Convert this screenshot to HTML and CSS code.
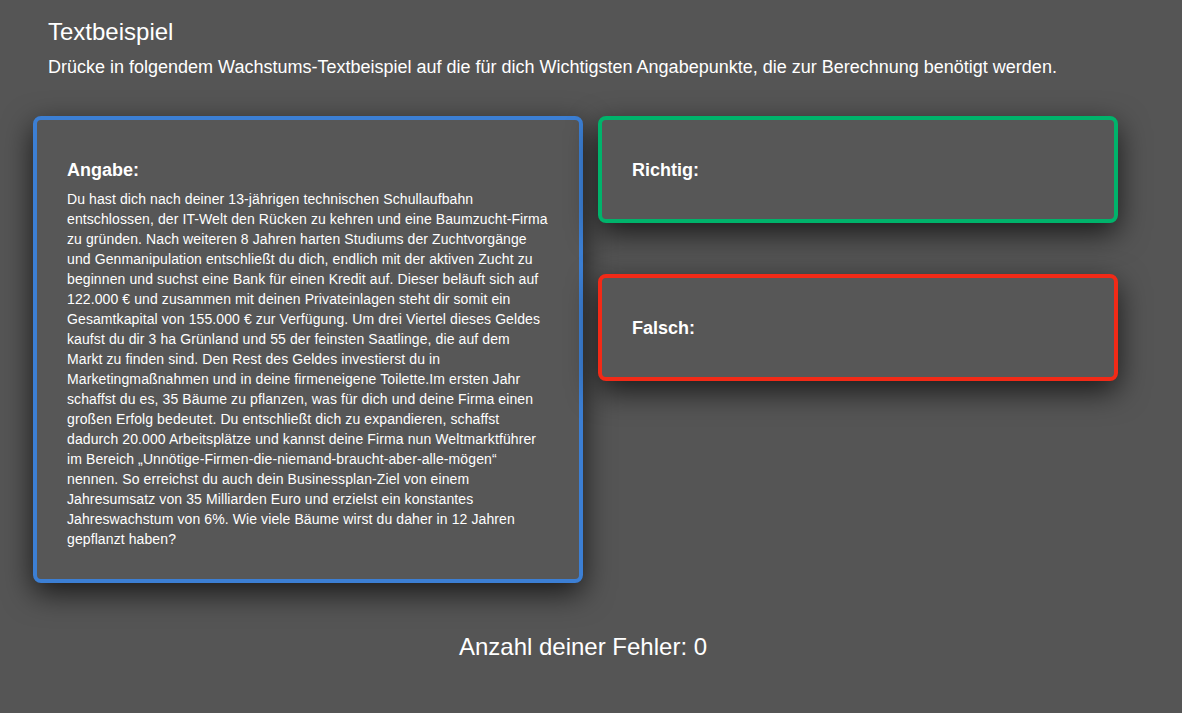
FILE: index.html
```html
<!DOCTYPE html>
<html lang="de">
<head>
<meta charset="utf-8">
<title>Textbeispiel</title>
<link rel="stylesheet" href="styles.css">
</head>
<body>
<div class="page">
  <header class="intro">
    <h1 class="title">Textbeispiel</h1>
    <p class="lead">Drücke in folgendem Wachstums-Textbeispiel auf die für dich Wichtigsten Angabepunkte, die zur Berechnung benötigt werden.</p>
  </header>
  <main class="board">
    <section class="card card-blue">
      <h2 class="card-title">Angabe:</h2>
      <p class="card-text">Du hast dich nach deiner 13-jährigen technischen Schullaufbahn entschlossen, der IT-Welt den Rücken zu kehren und eine Baumzucht-Firma zu gründen. Nach weiteren 8 Jahren harten Studiums der Zuchtvorgänge und Genmanipulation entschließt du dich, endlich mit der aktiven Zucht zu beginnen und suchst eine Bank für einen Kredit auf. Dieser beläuft sich auf 122.000 € und zusammen mit deinen Privateinlagen steht dir somit ein Gesamtkapital von 155.000 € zur Verfügung. Um drei Viertel dieses Geldes kaufst du dir 3 ha Grünland und 55 der feinsten Saatlinge, die auf dem Markt zu finden sind. Den Rest des Geldes investierst du in Marketingmaßnahmen und in deine firmeneigene Toilette.Im ersten Jahr schaffst du es, 35 Bäume zu pflanzen, was für dich und deine Firma einen großen Erfolg bedeutet. Du entschließt dich zu expandieren, schaffst dadurch 20.000 Arbeitsplätze und kannst deine Firma nun Weltmarktführer im Bereich „Unnötige-Firmen-die-niemand-braucht-aber-alle-mögen“ nennen. So erreichst du auch dein Businessplan-Ziel von einem Jahresumsatz von 35 Milliarden Euro und erzielst ein konstantes Jahreswachstum von 6%. Wie viele Bäume wirst du daher in 12 Jahren gepflanzt haben?</p>
    </section>
    <div class="side">
      <section class="card card-green">
        <h2 class="card-title">Richtig:</h2>
      </section>
      <section class="card card-red">
        <h2 class="card-title">Falsch:</h2>
      </section>
    </div>
  </main>
  <p class="errors">Anzahl deiner Fehler: 0</p>
</div>
</body>
</html>
```
FILE: styles.css
```css
* { box-sizing: border-box; }
html, body {
  margin: 0;
  padding: 0;
  background: #555555;
  color: #ffffff;
  font-family: "Liberation Sans", Arial, sans-serif;
}
.page {
  width: 1100px;
  margin-left: 33px;
  padding-top: 17px;
}
.intro {
  padding-left: 15px;
}
.title {
  margin: 0;
  font-size: 24px;
  font-weight: normal;
  line-height: 30px;
}
.lead {
  margin: 9px 0 0;
  font-size: 18px;
  line-height: 22px;
}
.board {
  display: flex;
  align-items: flex-start;
  gap: 15px;
  margin-top: 38px;
}
.card {
  background: #575757;
  border: 4px solid #3c7fd4;
  border-radius: 8px;
  padding: 30px;
  box-shadow: 0 10px 30px rgba(0, 0, 0, 0.7);
}
.card-blue {
  width: 550px;
  border-color: #3c7fd4;
}
.side {
  width: 520px;
  display: flex;
  flex-direction: column;
  gap: 51px;
}
.card-green { border-color: #00b36b; }
.card-red { border-color: #f22a17; }
.card-title {
  margin: 10px 0 9px;
  font-size: 18px;
  font-weight: bold;
  line-height: 20px;
}
.card-text {
  margin: 0;
  font-size: 14px;
  line-height: 20px;
  letter-spacing: 0.1px;
}
.errors {
  margin: 49px 0 0;
  text-align: center;
  font-size: 24px;
  line-height: 30px;
}
```
